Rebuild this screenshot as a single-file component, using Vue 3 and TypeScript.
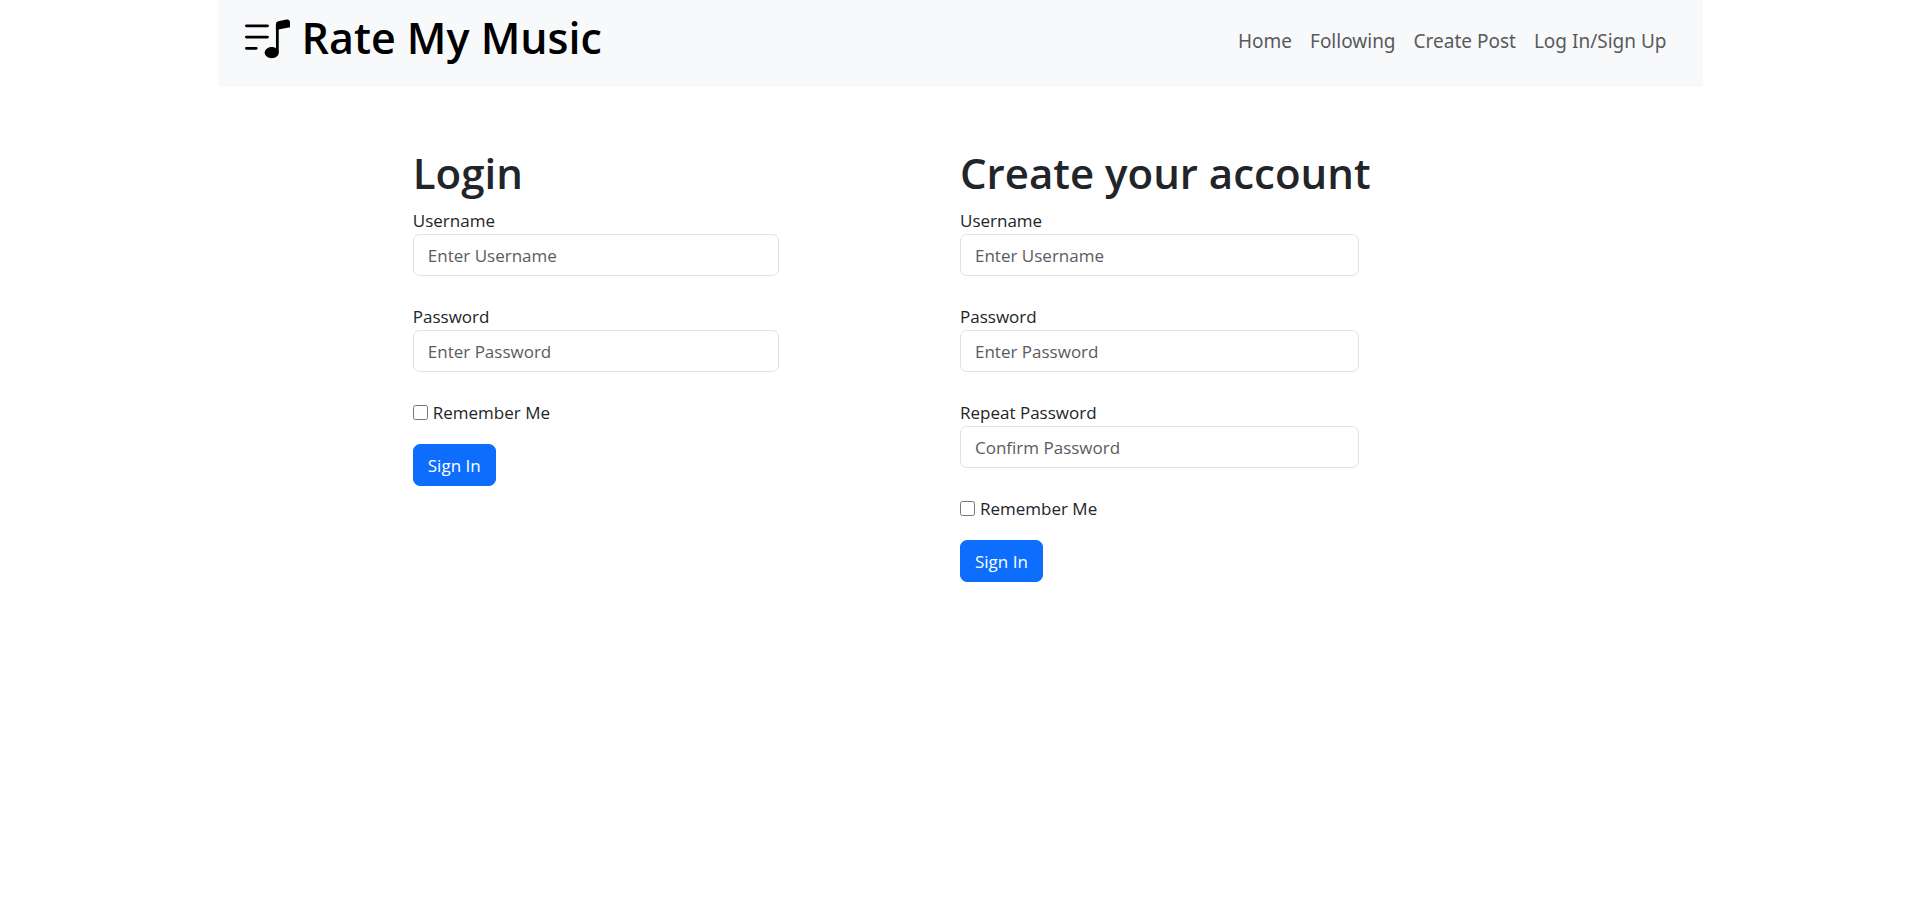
<script setup lang="ts">
interface Field {
  id: string
  label: string
  placeholder: string
  type: 'text' | 'password'
}

interface AccountForm {
  id: string
  title: string
  fields: Field[]
}

const links: string[] = ['Home', 'Following', 'Create Post', 'Log In/Sign Up']

const forms: AccountForm[] = [
  {
    id: 'login',
    title: 'Login',
    fields: [
      { id: 'login-username', label: 'Username', placeholder: 'Enter Username', type: 'text' },
      { id: 'login-password', label: 'Password', placeholder: 'Enter Password', type: 'password' },
    ],
  },
  {
    id: 'signup',
    title: 'Create your account',
    fields: [
      { id: 'signup-username', label: 'Username', placeholder: 'Enter Username', type: 'text' },
      { id: 'signup-password', label: 'Password', placeholder: 'Enter Password', type: 'password' },
      { id: 'signup-repeat', label: 'Repeat Password', placeholder: 'Confirm Password', type: 'password' },
    ],
  },
]
</script>

<template>
  <div class="page">
    <header class="navbar">
      <a class="brand" href="#">
        <svg class="brand-icon" viewBox="0 0 16 16" fill="currentColor" aria-hidden="true">
          <path d="M12 13c0 1.105-1.12 2-2.5 2S7 14.105 7 13s1.12-2 2.5-2 2.5.895 2.5 2" />
          <path d="M12 3v10h-1V3z" />
          <path d="M11 2.82a1 1 0 0 1 .804-.98l3-.6A1 1 0 0 1 16 2.22V4l-5 1z" />
          <path d="M0 11.5a.5.5 0 0 1 .5-.5H4a.5.5 0 0 1 0 1H.5a.5.5 0 0 1-.5-.5m0-4A.5.5 0 0 1 .5 7H8a.5.5 0 0 1 0 1H.5a.5.5 0 0 1-.5-.5m0-4A.5.5 0 0 1 .5 3H8a.5.5 0 0 1 0 1H.5a.5.5 0 0 1-.5-.5" />
        </svg>
        <span>Rate My Music</span>
      </a>
      <nav class="links">
        <a v-for="link in links" :key="link" href="#">{{ link }}</a>
      </nav>
    </header>

    <main class="forms">
      <form v-for="form in forms" :key="form.id" class="account" :class="form.id" @submit.prevent>
        <h1>{{ form.title }}</h1>
        <div v-for="field in form.fields" :key="field.id" class="field">
          <label :for="field.id">{{ field.label }}</label>
          <input :id="field.id" :type="field.type" :placeholder="field.placeholder" />
        </div>
        <div class="remember">
          <input :id="`${form.id}-remember`" type="checkbox" />
          <label :for="`${form.id}-remember`">Remember Me</label>
        </div>
        <button type="submit">Sign In</button>
      </form>
    </main>
  </div>
</template>

<style>
body {
  margin: 0;
  background: #fff;
}
</style>

<style scoped>
.page {
  font-family: "Segoe UI", "Open Sans", "Noto Sans", sans-serif;
  font-size: 17px;
  line-height: 27px;
  color: #212529;
}

.page * {
  box-sizing: border-box;
}

.navbar {
  display: flex;
  align-items: flex-start;
  justify-content: space-between;
  max-width: 1485px;
  min-height: 87px;
  margin: 0 auto;
  padding: 8px 27px;
  background: #f8f9fb;
}

.brand {
  display: flex;
  gap: 12px;
  align-items: center;
  color: #000;
  font-size: 43px;
  font-weight: 600;
  line-height: 60px;
  text-decoration: none;
  white-space: nowrap;
}

.brand-icon {
  width: 45px;
  height: 45px;
}

.links {
  display: flex;
  padding: 20px 0;
}

.links a {
  padding: 0 9px;
  color: #595a5b;
  font-family: "Segoe UI", "Noto Sans", "Open Sans", sans-serif;
  font-size: 19px;
  text-decoration: none;
  white-space: nowrap;
}

.forms {
  display: flex;
  width: 57%;
  margin: 59px auto 0;
}

.account {
  flex: 1 1 0;
  min-width: 0;
}

h1 {
  margin: 0 0 7px;
  font-size: 42px;
  font-weight: 600;
  line-height: 54px;
  white-space: nowrap;
}

.field {
  display: flex;
  flex-direction: column;
  margin-bottom: 27px;
}

.login .field {
  width: 67%;
}

.signup .field {
  width: 73%;
}

.field input {
  width: 100%;
  height: 42px;
  padding: 6px 14px;
  border: 1px solid #dee2e6;
  border-radius: 7px;
  background: #fff;
  color: #212529;
  font: inherit;
}

.field input::placeholder {
  color: #595c5f;
  opacity: 1;
}

.remember {
  display: flex;
  gap: 5px;
  align-items: center;
  margin-bottom: 18px;
}

.remember input {
  width: 15px;
  height: 15px;
  margin: 0;
}

button {
  height: 42px;
  padding: 6px 14px;
  border: 1px solid #0d6efd;
  border-radius: 7px;
  background: #0d6efd;
  color: #fff;
  font: inherit;
  cursor: pointer;
}
</style>
